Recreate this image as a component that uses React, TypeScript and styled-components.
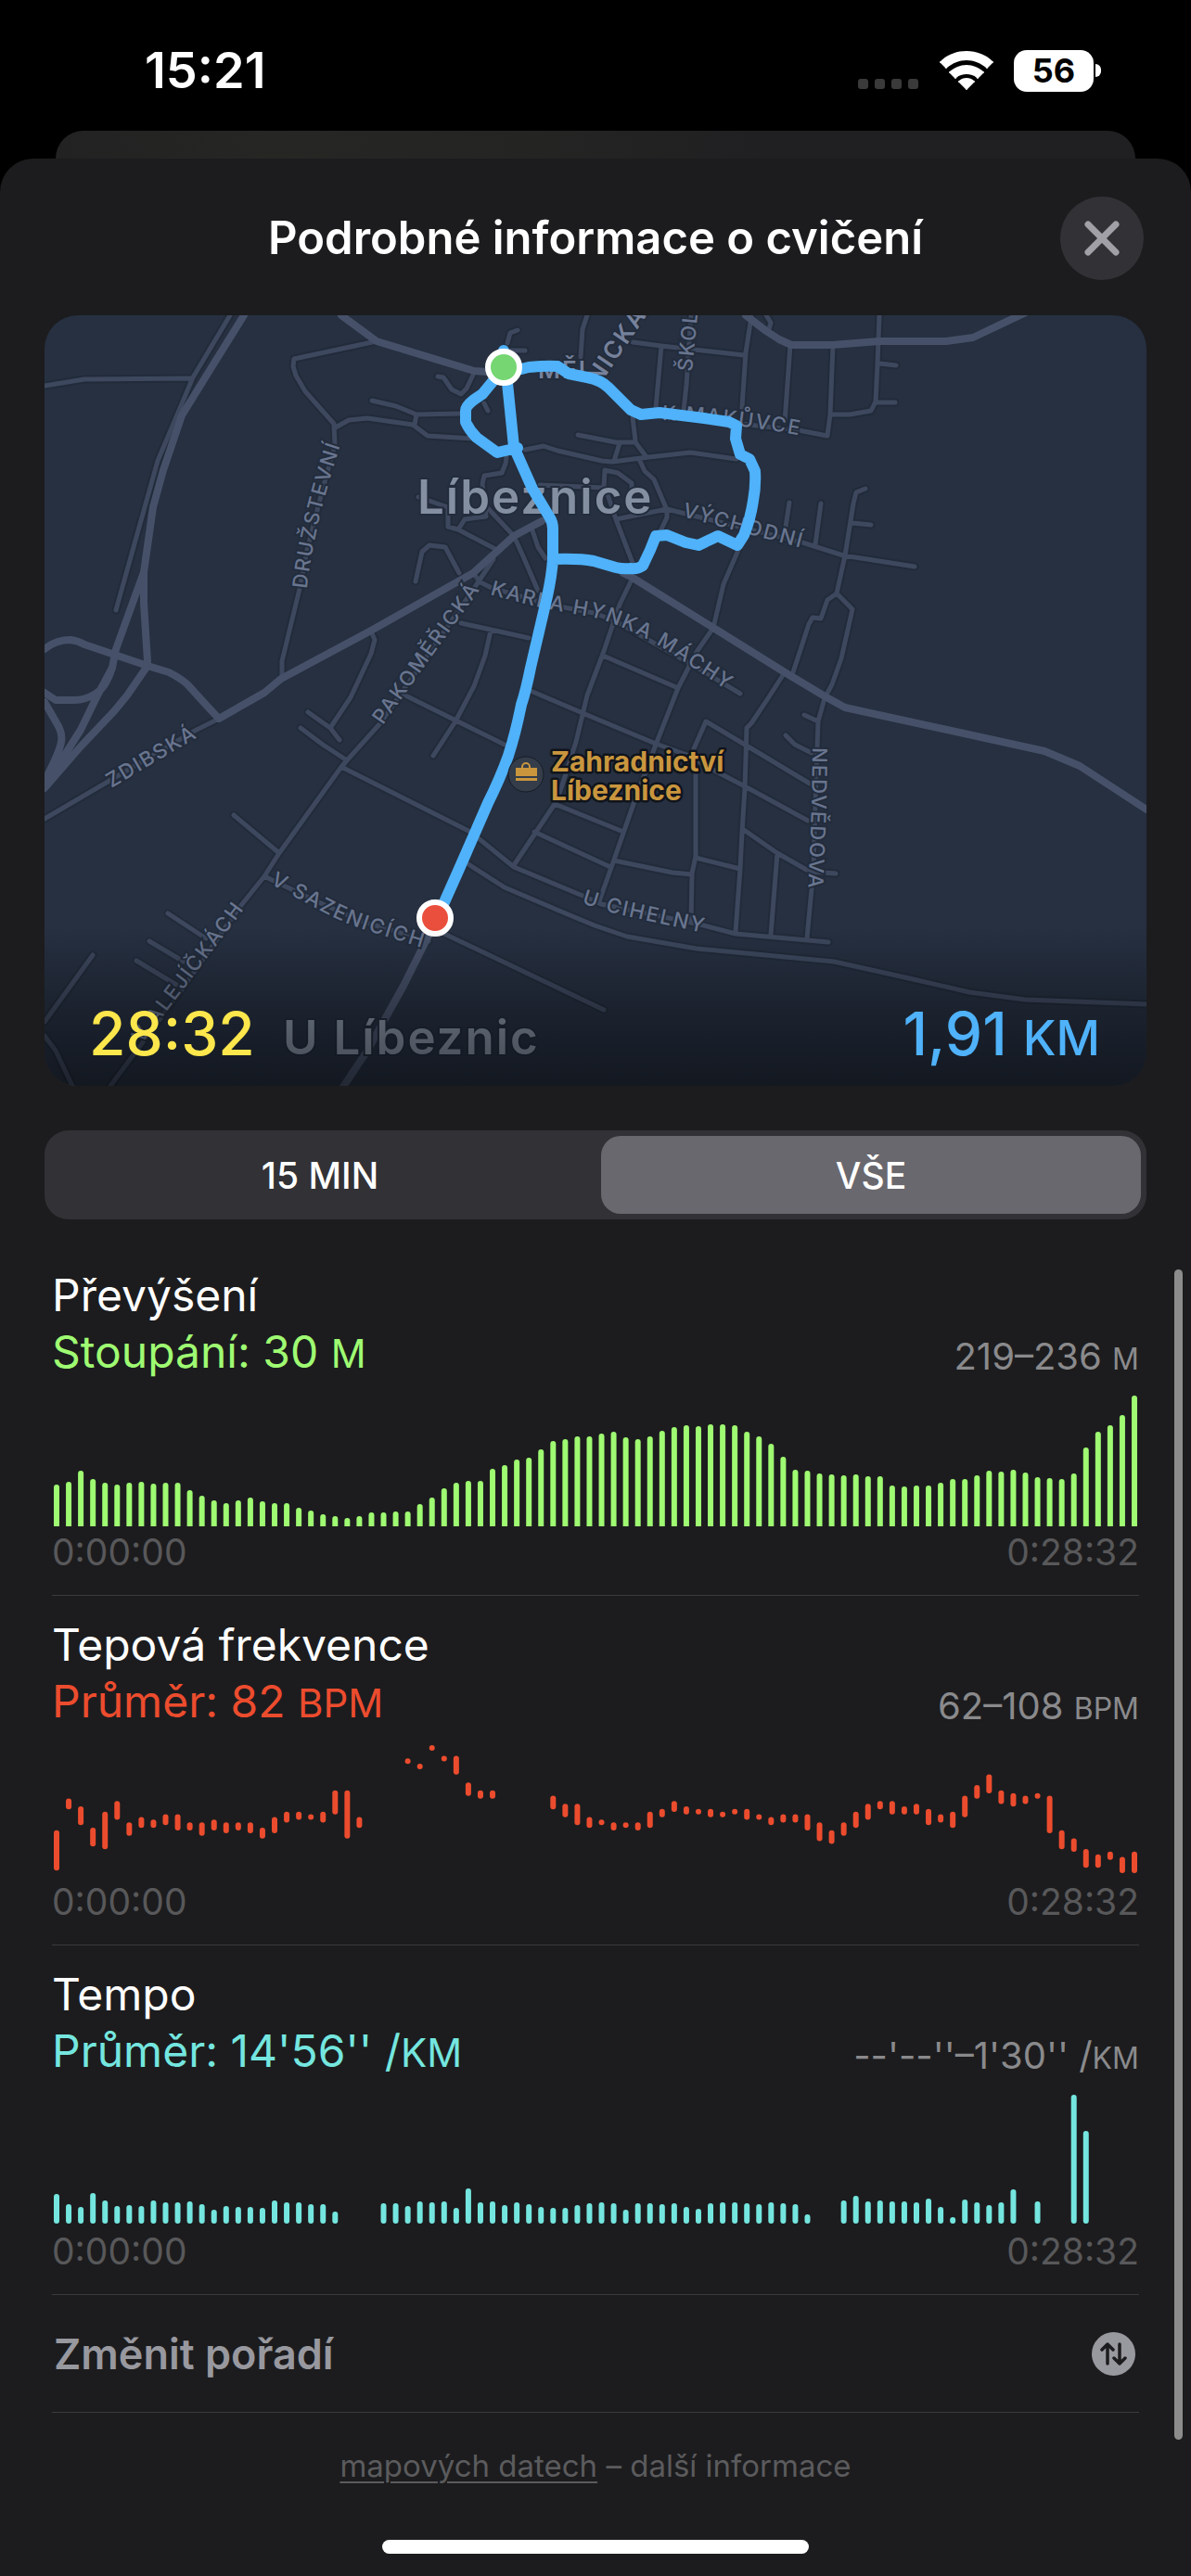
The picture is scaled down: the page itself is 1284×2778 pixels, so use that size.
import React, { useState } from "react";
import styled, { createGlobalStyle } from "styled-components";

const GlobalStyle = createGlobalStyle`
  *, *::before, *::after { box-sizing: border-box; }
  html { background: #000; }
  body {
    margin: 0;
    background: #000;
    color: #fff;
    font-family: Inter, "Liberation Sans", sans-serif;
  }
  button { font: inherit; border: 0; padding: 0; background: none; color: inherit; cursor: pointer; }
  h1, h2, p { margin: 0; font-weight: inherit; }
  small { line-height: 0; }
`;

const Screen = styled.div`
  display: flex;
  flex-direction: column;
  min-height: 100vh;
`;

const StatusBar = styled.header`
  display: flex;
  justify-content: space-between;
  align-items: center;
  height: 141px;
  padding: 11px 97px 0 156px;
`;

const Clock = styled.time`
  font-size: 54px;
  line-height: 64px;
  font-weight: 600;
`;

const StatusIcons = styled.div`
  display: flex;
  align-items: center;
  gap: 22px;
`;

const SignalDots = styled.svg`
  width: 66px;
  height: 44px;
`;

const WifiIcon = styled.svg`
  width: 58px;
  height: 44px;
`;

const Battery = styled.div`
  display: flex;
  align-items: center;
  gap: 2px;
`;

const BatteryLevel = styled.span`
  width: 86px;
  height: 45px;
  border-radius: 14px;
  background: #fff;
  color: #000;
  font-size: 36px;
  line-height: 45px;
  font-weight: 700;
  text-align: center;
`;

const BatteryCap = styled.span`
  width: 6px;
  height: 14px;
  border-radius: 0 6px 6px 0;
  background: #fff;
`;

const SheetBehind = styled.div`
  height: 30px;
  margin: 0 60px;
  border-radius: 30px 30px 0 0;
  background: linear-gradient(90deg, #222222, #262624 20%, #242423 45%, #202022 65%, #202022);
`;

const Sheet = styled.main`
  display: flex;
  flex: 1;
  flex-direction: column;
  border-radius: 36px 36px 0 0;
  background: #1c1c1e;
`;

const SheetHeader = styled.div`
  display: grid;
  grid-template-columns: 1fr auto 1fr;
  align-items: center;
  height: 169px;
  padding: 2px 51px 0;
`;

const Title = styled.h1`
  grid-column: 2;
  font-size: 49px;
  line-height: 64px;
  font-weight: 600;
`;

const CloseButton = styled.button`
  display: grid;
  place-items: center;
  justify-self: end;
  width: 90px;
  height: 90px;
  border-radius: 50%;
  background: #323236;

  svg { width: 44px; height: 44px; }
`;

const MapCard = styled.section`
  position: relative;
  margin: 0 48px;
  border-radius: 36px;
  overflow: hidden;
  background: #263041;
`;

const MapDrawing = styled.svg`
  display: block;
  width: 100%;
  height: auto;
`;

const StreetName = styled.text`
  font-size: 22px;
  font-weight: 500;
  letter-spacing: 2px;
  fill: #69758f;
  stroke: #222c3c;
  stroke-width: 4px;
  paint-order: stroke;
`;

const MainStreetName = styled(StreetName)`
  font-size: 26px;
  font-weight: 600;
  fill: #76819b;
`;

const PlaceName = styled.text`
  font-size: 51px;
  font-weight: 600;
  letter-spacing: 2px;
  fill: #8490a2;
  stroke: #222c3c;
  stroke-width: 4px;
  paint-order: stroke;
`;

const ShopName = styled.text`
  font-size: 30px;
  font-weight: 700;
  fill: #c9963e;
  stroke: #10141c;
  stroke-width: 5px;
  stroke-linejoin: round;
  paint-order: stroke;
`;

const MapSummary = styled.div`
  position: absolute;
  inset: auto 0 0;
  display: flex;
  justify-content: space-between;
  align-items: flex-end;
  height: 172px;
  padding: 0 50px 18px 48px;
  background: linear-gradient(rgba(0, 0, 0, 0), rgba(0, 0, 0, 0.28) 50%, rgba(0, 0, 0, 0.5));
`;

const Total = styled.p<{ $color: string }>`
  color: ${(p) => p.$color};
  font-size: 64px;
  line-height: 76px;
  font-weight: 500;

  small { font-size: 52px; }
`;

const Segments = styled.div`
  display: grid;
  grid-template-columns: 1fr 1fr;
  gap: 12px;
  height: 96px;
  margin: 48px 48px 0;
  padding: 6px;
  border-radius: 26px;
  background: #323136;
`;

const Segment = styled.button<{ $active: boolean }>`
  border-radius: 21px;
  background: ${(p) => (p.$active ? "#69686e" : "transparent")};
  color: #fff;
  font-size: 39px;
  font-weight: 500;
`;

const ScrollArea = styled.div`
  position: relative;
  display: flex;
  flex: 1;
  flex-direction: column;
  margin-top: 29px;
  padding: 0 56px 24px;
`;

const ScrollThumb = styled.span`
  position: absolute;
  top: 25px;
  right: 9px;
  bottom: 147px;
  width: 9px;
  border-radius: 5px;
  background: #8c8c8c;
`;

const Metric = styled.section`
  display: flex;
  flex-direction: column;
  padding: 22px 0;
  border-bottom: 1px solid #3b3b3e;
`;

const MetricHead = styled.div`
  display: flex;
  justify-content: space-between;
  align-items: flex-end;
`;

const MetricTitle = styled.h2`
  font-size: 48px;
  line-height: 61px;
`;

const MetricValue = styled.p<{ $color: string }>`
  color: ${(p) => p.$color};
  font-size: 48px;
  line-height: 61px;

  small { font-size: 42px; }
`;

const MetricRange = styled.p`
  color: #8a8a8c;
  font-size: 40px;
  line-height: 50px;

  small { font-size: 32px; }
`;

const ChartDrawing = styled.svg`
  display: block;
  width: 100%;
  height: 141px;
  margin: 17px 0 4px;
`;

const TimeAxis = styled.div`
  display: flex;
  justify-content: space-between;
  color: #58585a;
  font-size: 39px;
  line-height: 48px;
`;

const ReorderButton = styled.button`
  display: flex;
  justify-content: space-between;
  align-items: center;
  height: 127px;
  padding: 0 4px 0 2px;
  border-bottom: 1px solid #3b3b3e;
  color: #98989f;
  font-size: 45px;
  font-weight: 600;

  svg { width: 47px; height: 47px; }
`;

const Legal = styled.p`
  margin-top: 35px;
  color: #5b5b5d;
  font-size: 33px;
  line-height: 44px;
  text-align: center;

  a {
    color: inherit;
    text-decoration-thickness: 2px;
    text-underline-offset: 5px;
  }
`;

const HomeIndicator = styled.span`
  align-self: center;
  width: 460px;
  max-width: 60%;
  height: 15px;
  margin-top: auto;
  border-radius: 8px;
  background: #fff;
`;

const elevation = [
  45, 48, 60, 51, 47, 45, 47, 48, 46, 47, 47, 39, 33, 28, 25, 28, 31, 27, 25, 25, 20, 17, 13, 11, 9, 11, 15, 15, 16, 16,
  24, 31, 41, 47, 49, 49, 62, 66, 72, 74, 83, 92, 94, 97, 97, 100, 102, 96, 94, 97, 103, 107, 109, 108, 110, 110, 109,
  102, 97, 89, 75, 61, 60, 57, 56, 55, 56, 54, 54, 44, 43, 44, 44, 47, 51, 51, 55, 60, 59, 61, 58, 53, 52, 51, 57, 85,
  102, 109, 120, 141,
];

const pace = [
  32, 21, 18, 33, 25, 19, 20, 19, 25, 23, 23, 24, 21, 15, 19, 18, 18, 17, 25, 23, 23, 21, 21, 13, 0, 0, 0, 22, 22, 19,
  24, 23, 24, 17, 38, 23, 24, 20, 23, 21, 18, 17, 17, 20, 22, 23, 22, 15, 22, 22, 21, 22, 18, 16, 22, 23, 23, 22, 21,
  23, 22, 21, 10, 0, 0, 25, 30, 24, 25, 24, 24, 23, 27, 18, 7, 26, 23, 20, 23, 37, 0, 24, 0, 0, 139, 100, 0, 0, 0, 0,
];

/* [lowest, highest] beats per minute in each slot; null where nothing was measured */
const heartRate: ([number, number] | null)[] = [
  [63, 76], [86, 88], [80, 85], [72, 77], [71, 83], [82, 87], [76, 79], [79, 81], [79, 80], [80, 82],
  [78, 82], [78, 79], [76, 79], [78, 80], [77, 79], [78, 79], [77, 79], [75, 77], [77, 81], [81, 83],
  [82, 83], [82, 82], [81, 83], [84, 91], [75, 91], [79, 81], null, null, null, [103, 103],
  [101, 101], [108, 108], [104, 104], [99, 104], [91, 94], [90, 91], [90, 91], null, null, null,
  null, [86, 89], [83, 86], [80, 86], [79, 81], [80, 80], [78, 79], [79, 79], [78, 79], [79, 83],
  [83, 84], [85, 87], [84, 85], [84, 84], [83, 84], [83, 83], [84, 84], [82, 84], [82, 82], [80, 81],
  [81, 82], [81, 82], [78, 82], [74, 79], [73, 76], [76, 79], [79, 83], [82, 86], [86, 87], [84, 87],
  [84, 85], [84, 86], [80, 84], [81, 82], [79, 83], [83, 89], [90, 93], [92, 97], [88, 91], [87, 90],
  [88, 89], [90, 90], [77, 89], [71, 76], [70, 73], [64, 69], [64, 67], [67, 68], [62, 66], [62, 68],
];

const CHART_W = 1172;
const BAR_W = 6;
const barX = (i: number) => 2 + (i * (CHART_W - BAR_W - 4)) / 89;

function ElevationChart() {
  return (
    <ChartDrawing viewBox={`0 0 ${CHART_W} 141`} preserveAspectRatio="none" role="img" aria-label="Graf převýšení">
      {elevation.map((h, i) => (
        <path
          key={i}
          fill="#9ffb72"
          d={`M${barX(i)} 141V${144 - h}a3 3 0 0 1 ${BAR_W} 0V141z`}
        />
      ))}
    </ChartDrawing>
  );
}

function HeartRateChart() {
  const perBeat = 132 / 46;
  return (
    <ChartDrawing viewBox={`0 0 ${CHART_W} 141`} preserveAspectRatio="none" role="img" aria-label="Graf tepové frekvence">
      {heartRate.map(
        (slot, i) =>
          slot && (
            <rect
              key={i}
              x={barX(i)}
              y={(108 - slot[1]) * perBeat}
              width={BAR_W}
              height={(slot[1] - slot[0]) * perBeat + BAR_W}
              rx="3"
              fill="#ec4c2e"
            />
          )
      )}
    </ChartDrawing>
  );
}

function PaceChart() {
  return (
    <ChartDrawing viewBox={`0 0 ${CHART_W} 141`} preserveAspectRatio="none" role="img" aria-label="Graf tempa">
      {pace.map(
        (h, i) => h > 0 && <rect key={i} x={barX(i)} y={139 - h} width={BAR_W} height={h} rx="3" fill="#74e6df" />
      )}
    </ChartDrawing>
  );
}

const minorRoads = [
  "M248 340L208 407L170 497L125 658",
  "M48 416L91 409L206 408",
  "M406 368L317 387L316 395L319 405L329 422L360 457L361 480L348 527L331 593L323 635L304 713V728",
  "M360 462L376 453L396 451L445 458L461 470L511 473",
  "M401 432L427 438L449 447L497 446M449 447L447 458",
  "M472 406L478 407L487 420L497 425L503 419L511 402",
  "M522 435L526 443M558 356L550 359L547 370M550 378H566",
  "M633 340L628 355L626 385",
  "M566 485L586 481L601 486L649 497L660 498L699 493L744 488L794 495",
  "M623 469L664 477L685 477L697 493M668 478L662 497M682 450L685 475",
  "M546 493L545 500L541 510L522 513L520 522L524 557L501 560L494 571L483 568V547L451 536",
  "M494 571L507 578L534 592M525 547L554 578L564 600L580 637M574 572L580 590L588 602",
  "M448 627L455 595L463 588L480 590L495 618M532 603L514 630",
  "M510 618L518 628L530 634L592 652L640 661L662 669L699 690L755 722L798 748",
  "M582 523L651 526L652 507L666 510L681 521V530M654 530L664 560L682 607",
  "M689 495L695 508L705 517L719 550V558L711 575",
  "M664 560L719 549L735 553L865 585L909 599L986 611",
  "M682 623L668 652L650 705L633 750L621 800L605 850L598 867L554 933",
  "M796 593L780 630L769 677L751 703L731 742L707 803L683 867L662 927L646 972",
  "M650 707L731 742",
  "M846 725L830 750L810 780L805 785L803 850L800 897L798 937L793 1005",
  "M889 753L882 778L881 807L879 867L877 937L870 1012",
  "M867 771L882 778M847 793L857 803L875 812",
  "M933 527L923 531L920 543L911 599L902 640L919 657L907 710L897 738L889 753",
  "M902 640L892 647L885 667L876 666L872 673L855 725M919 564L939 566",
  "M851 542L847 568M885 543L879 587",
  "M826 340L831 348L829 355M810 342L804 380L799 453",
  "M852 372L846 455M898 372L895 447L892 470L861 464L798 457",
  "M948 340L946 393L944 433L939 443L916 447H896M948 392L966 394M944 434H965",
  "M682 369L713 373L802 383M713 373L707 440M745 340L740 415L737 443",
  "M497 672L570 688M529 680L523 707L511 740L491 778L467 815",
  "M401 683L404 690L400 705L378 752L356 785M332 768L356 785L366 798",
  "M324 785L348 803L374 820",
  "M532 603L510 636L410 780L374 820L368 827L301 920L285 945L257 980L194 1070L119 1171",
  "M368 827L507 897L554 935L633 968L648 975L755 997L793 1007L893 1016",
  "M505 932L544 957L605 983L641 998L676 1010L751 1023L899 1037L980 1055L1045 1070L1105 1078L1236 1083",
  "M252 879L301 920M435 749L544 803",
  "M572 745L640 774L707 802L743 815L774 833L803 848L871 885",
  "M745 993L746 942L750 923V833L746 812L761 778L803 803L873 845",
  "M802 895L838 920L873 940L901 942M838 920L831 1008",
  "M750 925L798 937M662 928L725 941L746 943M598 867L672 897M576 897L658 935",
  "M285 945L337 970L388 993L462 1015M479 1007L651 1089",
  "M181 985L222 1012M161 1015L198 1037M147 1036L190 1062",
  "M100 1030L48 1102M48 1117L60 1133L78 1171",
  "M236 775L210 788L48 883",
];

const mainRoads = [
  "M263 340L230 393L196 448L176 507L165 547L155 617L125 700L121 720Q114 742 103 748Q92 755 80 755H60L48 747",
  "M121 720L105 750L87 787L68 817L48 847",
  "M155 617V650L159 713M159 718L137 750L123 767L87 805L48 850",
  "M48 700Q60 690 76 690Q84 691 91 695L159 718L182 725Q194 731 202 738L222 760L236 775",
  "M48 757L60 778Q68 790 66 800Q64 812 48 842",
  "M236 775L285 747L303 732L400 680L510 618L554 578L584 562",
  "M368 340L406 368L511 400L526 401",
  "M672 618L682 623L769 677L846 725L891 752L911 763L1126 810L1164 826L1236 873",
  "M804 340L826 357L840 366L853 372H897L948 368H1020L1049 364L1110 335",
  "M465 1003L435 1063L396 1133L368 1175",
];

const route =
  "M543 378V397L520 425L511 431Q502 438 502 443V455Q506 464 514 472L536 488L558 483" +
  "M543 397L547 413L554 482L574 527L592 557Q596 563 596 570V603Q595 620 590 643L572 720Q567 745 562 760Q556 790 548 815Q539 840 526 866L495 937L479 973L469 990" +
  "M543 397L562 398L570 396Q590 394 601 395L613 403L633 407Q648 410 656 418L680 442L691 447L711 445L759 451L786 455L794 459L793 473L798 490L808 495L814 508Q815 524 812 540Q809 560 802 577L795 588L774 578L753 588L739 585L719 577L707 578L701 593L693 610Q687 614 680 613Q672 614 664 612L640 605Q625 602 596 603";

const streets = [
  { id: "druzstevni", name: "DRUŽSTEVNÍ", d: "M331 635Q338 568 367 480L370 465" },
  { id: "skolni", name: "ŠKOLNÍ", d: "M746 401L757 290" },
  { id: "makuvce", name: "K MAKŮVCE", d: "M714 453Q790 455 880 473" },
  { id: "vychodni", name: "VÝCHODNÍ", d: "M735 557L880 595" },
  { id: "macha", name: "KARLA HYNKA MÁCHY", d: "M528 641Q580 656 641 666Q678 676 723 704L810 762" },
  { id: "pakomericka", name: "PAKOMĚŘICKÁ", d: "M413 782Q462 712 530 618" },
  { id: "zdibska", name: "ZDIBSKÁ", d: "M120 850L240 779" },
  { id: "sazenice", name: "V SAZENICÍCH", d: "M291 953L336 977Q364 993 394 1003L480 1030" },
  { id: "alejicky", name: "V ALEJÍČKÁCH", d: "M153 1126L280 958" },
  { id: "cihelna", name: "U CIHELNY", d: "M627 974L662 985L790 1013" },
  { id: "nedvedova", name: "NEDVĚDOVA", d: "M876 806L875 870L870 990" },
];

function RouteMap() {
  return (
    <MapDrawing viewBox="48 340 1188 831" role="img" aria-label="Mapa trasy">
      <g fill="none" strokeLinecap="round" strokeLinejoin="round">
        <path d={minorRoads.join("")} stroke="#212b3a" strokeWidth="9" />
        <path d={minorRoads.join("")} stroke="#3d485e" strokeWidth="5" />
        <path d={mainRoads.join("")} stroke="#465169" strokeWidth="8" />
      </g>
      {streets.map((s) => (
        <React.Fragment key={s.id}>
          <path id={s.id} d={s.d} fill="none" />
          <StreetName>
            <textPath href={`#${s.id}`}>{s.name}</textPath>
          </StreetName>
        </React.Fragment>
      ))}
      <MainStreetName x="580" y="408">MĚL</MainStreetName>
      <path id="melnicka" d="M646 416L730 292" fill="none" />
      <MainStreetName>
        <textPath href="#melnicka">NICKÁ</textPath>
      </MainStreetName>
      <PlaceName x="450" y="554">Líbeznice</PlaceName>
      <PlaceName x="305" y="1137">U Líbeznic</PlaceName>
      <path d={route} fill="none" stroke="#4fb2fa" strokeWidth="12" strokeLinecap="round" strokeLinejoin="round" />
      <circle cx="543" cy="396" r="17" fill="#75d672" stroke="#fff" strokeWidth="6" />
      <circle cx="469" cy="990" r="17" fill="#ea4f3d" stroke="#fff" strokeWidth="6" />
      <circle cx="567" cy="835" r="19" fill="#343d49" stroke="#161c26" strokeWidth="1" />
      <path d="M556 828h23v9h-23zM556 839h23v3h-23z" fill="#c9963e" />
      <path d="M563 828v-1a4 4 0 0 1 8 0v1" fill="none" stroke="#c9963e" strokeWidth="2" />
      <ShopName x="594" y="832">Zahradnictví</ShopName>
      <ShopName x="594" y="863">Líbeznice</ShopName>
    </MapDrawing>
  );
}

interface MetricBlockProps {
  title: string;
  label: string;
  unit: string;
  color: string;
  range: string;
  rangeUnit: string;
  children: React.ReactNode;
}

function MetricBlock({ title, label, unit, color, range, rangeUnit, children }: MetricBlockProps) {
  return (
    <Metric>
      <MetricTitle>{title}</MetricTitle>
      <MetricHead>
        <MetricValue $color={color}>
          {label}
          <small>{unit}</small>
        </MetricValue>
        <MetricRange>
          {range}
          <small>{rangeUnit}</small>
        </MetricRange>
      </MetricHead>
      {children}
      <TimeAxis>
        <span>0:00:00</span>
        <span>0:28:32</span>
      </TimeAxis>
    </Metric>
  );
}

export default function App() {
  const [span, setSpan] = useState<"15" | "all">("all");

  return (
    <Screen>
      <GlobalStyle />
      <StatusBar>
        <Clock>15:21</Clock>
        <StatusIcons>
          <SignalDots viewBox="0 0 66 44" aria-hidden="true" fill="#3a3a3a">
            {[0, 18, 36, 54].map((x) => (
              <rect key={x} x={x} y="31" width="11" height="11" rx="3" />
            ))}
          </SignalDots>
          <WifiIcon viewBox="0 0 58 44" aria-hidden="true" fill="#fff">
            <path d="M29 1C18 1 8 5 1 12a1 1 0 0 0 0 2l5 5a1 1 0 0 0 2 0C14 14 21 11 29 11s15 3 21 8a1 1 0 0 0 2 0l5-5a1 1 0 0 0 0-2C50 5 40 1 29 1z" />
            <path d="M29 16c-7 0-13 3-18 7a1 1 0 0 0 0 2l5 5a1 1 0 0 0 2 0c3-3 7-4 11-4s8 1 11 4a1 1 0 0 0 2 0l5-5a1 1 0 0 0 0-2c-5-4-11-7-18-7z" />
            <path d="M29 30c-3 0-6 1-8 3a1 1 0 0 0 0 2l7 7a1 1 0 0 0 2 0l7-7a1 1 0 0 0 0-2c-2-2-5-3-8-3z" />
          </WifiIcon>
          <Battery>
            <BatteryLevel>56</BatteryLevel>
            <BatteryCap />
          </Battery>
        </StatusIcons>
      </StatusBar>

      <SheetBehind />
      <Sheet>
        <SheetHeader>
          <Title>Podrobné informace o cvičení</Title>
          <CloseButton type="button" aria-label="Zavřít">
            <svg viewBox="0 0 44 44" aria-hidden="true">
              <path d="M7 7L37 37M37 7L7 37" stroke="#a0a0a6" strokeWidth="7" strokeLinecap="round" />
            </svg>
          </CloseButton>
        </SheetHeader>

        <MapCard>
          <RouteMap />
          <MapSummary>
            <Total $color="#fde74c">28:32</Total>
            <Total $color="#4fb2fa">
              1,91 <small>KM</small>
            </Total>
          </MapSummary>
        </MapCard>

        <Segments role="group" aria-label="Rozsah">
          <Segment type="button" $active={span === "15"} aria-pressed={span === "15"} onClick={() => setSpan("15")}>
            15 MIN
          </Segment>
          <Segment type="button" $active={span === "all"} aria-pressed={span === "all"} onClick={() => setSpan("all")}>
            VŠE
          </Segment>
        </Segments>

        <ScrollArea>
          <MetricBlock
            title="Převýšení"
            label="Stoupání: 30 "
            unit="M"
            color="#9ffb72"
            range="219–236 "
            rangeUnit="M"
          >
            <ElevationChart />
          </MetricBlock>
          <MetricBlock
            title="Tepová frekvence"
            label="Průměr: 82 "
            unit="BPM"
            color="#ec4c2e"
            range="62–108 "
            rangeUnit="BPM"
          >
            <HeartRateChart />
          </MetricBlock>
          <MetricBlock
            title="Tempo"
            label="Průměr: 14'56'' /"
            unit="KM"
            color="#74e6df"
            range="--'--''–1'30'' /"
            rangeUnit="KM"
          >
            <PaceChart />
          </MetricBlock>

          <ReorderButton type="button">
            Změnit pořadí
            <svg viewBox="0 0 47 47" aria-hidden="true">
              <circle cx="23.5" cy="23.5" r="23.5" fill="#98989f" />
              <path
                d="M17 34V13M11 19l6-6 6 6M30 13v21M24 28l6 6 6-6"
                fill="none"
                stroke="#1c1c1e"
                strokeWidth="3.5"
                strokeLinecap="round"
                strokeLinejoin="round"
              />
            </svg>
          </ReorderButton>

          <Legal>
            <a href="#mapova-data">mapových datech</a> – další informace
          </Legal>
          <HomeIndicator />
          <ScrollThumb />
        </ScrollArea>
      </Sheet>
    </Screen>
  );
}
